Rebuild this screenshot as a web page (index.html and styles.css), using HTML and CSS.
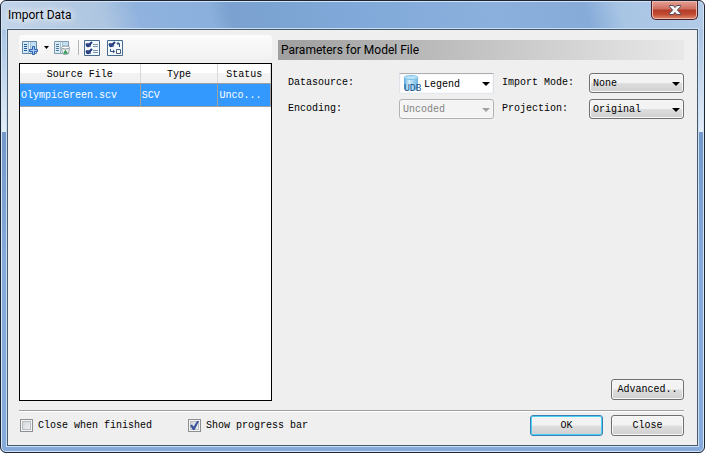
FILE: index.html
```html
<!DOCTYPE html>
<html lang="en">
<head>
<meta charset="utf-8">
<title>Import Data</title>
<link rel="stylesheet" href="styles.css">
</head>
<body>
<div class="window">
  <header class="titlebar">
    <h1 class="title">Import Data</h1>
    <button class="close-window" type="button" aria-label="Close window">
      <svg width="12" height="10" viewBox="0 0 12 10"><path d="M.5.5H4.3L6 2.6 7.7.5h3.8v1.2L8.4 5l3.1 3.3v1.2H7.7L6 7.4 4.3 9.5H.5V8.3L3.6 5 .5 1.7z" fill="#f6f4f4" stroke="#4d4a5c"/></svg>
    </button>
  </header>
  <main class="client">
    <div class="columns">
      <section class="files">
        <div class="toolbar">
          <button class="tool" type="button" aria-label="Add file">
            <svg width="17" height="16" viewBox="0 0 17 16"><path d="M.5 1.500h14v12H.5z" fill="#eef6fc" stroke="#6288a8"/><path d="M1 2h5v11H1z" fill="#d3e9f8"/><path d="M9 2h5v11H9z" fill="#c0def4"/><path d="M6.500 2v11M8.500 2v11" stroke="#9bbdd6"/><path d="M2 4.500h3M2 6.500h3M2 8.500h3M2 10.500h3" stroke="#24588c"/><path d="M10.500 6.500h2v3h3v2h-3v3h-2v-3h-3v-2h3z" fill="#a9cbf4" stroke="#2c5fae"/></svg>
          </button>
          <button class="tool tool-arrow" type="button" aria-label="More add options">
            <svg width="5" height="3" viewBox="0 0 5 3"><path d="M0 0h5L2.500 3z"/></svg>
          </button>
          <button class="tool" type="button" aria-label="Remove file">
            <svg width="17" height="16" viewBox="0 0 17 16"><path d="M.5 1.500h14v12H.5z" fill="#eef6fc" stroke="#7e9bb0"/><path d="M1 2h5v11H1z" fill="#d8ebf7"/><path d="M9 2h5v6H9z" fill="#c4dff1"/><path d="M6.500 2v11M8.500 2v11" stroke="#a5c1d4"/><path d="M2 4.500h3M2 6.500h3M2 8.500h3M2 10.500h3" stroke="#52789a"/><path d="M7.500 8.500h8l-1 5-2 1h-3l-1-1z" fill="#eef2f1" stroke="#9aa5a7"/><ellipse cx="11.500" cy="7.500" rx="4" ry="1.500" fill="#fff" stroke="#829093"/><path d="M10 13.200h3L11.500 10.800z" fill="none" stroke="#279552" stroke-width="1.200"/></svg>
          </button>
          <span class="divider"></span>
          <button class="tool tool-check" type="button" aria-label="Select all">
            <svg width="16" height="16" viewBox="0 0 16 16"><path d="M.5.500h15v15H.5z" fill="#f3f9fd" stroke="#466b8c"/><path d="M2.500 3.500h4v3h-4zM2.500 10.500h4v3h-4z" fill="#c5d3e8" stroke="#5b6f9a"/><path d="M2 4l2 2 4-4M2 11l2 2 4-4" fill="none" stroke="#263c80" stroke-width="2"/><path d="M9 4.500h5M9 6.500h5M9 10.500h5M9 12.500h5" stroke="#7b95aa"/></svg>
          </button>
          <button class="tool" type="button" aria-label="Invert selection">
            <svg width="16" height="16" viewBox="0 0 16 16"><path d="M.5.500h15v15H.5z" fill="#f3f9fd" stroke="#466b8c"/><path d="M2.500 3.500h4v3h-4z" fill="#c5d3e8" stroke="#5b6f9a"/><path d="M2 4l2 2 4-4" fill="none" stroke="#263c80" stroke-width="2"/><path d="M9.500 9.500h4v4h-4z" fill="#fff" stroke="#466080"/><path d="M11 3.500h1.500V7M3.500 9v2.500H7" fill="none" stroke="#2d4f79"/><path d="M11.500 1.500v4l-2-2zM6 9.500v4l2-2z" fill="#2d4f79"/></svg>
          </button>
        </div>
        <div class="table-frame">
          <table class="file-table">
            <colgroup><col class="col-source"><col class="col-type"><col></colgroup>
            <thead><tr><th>Source File</th><th>Type</th><th>Status</th></tr></thead>
            <tbody><tr><td>OlympicGreen.scv</td><td>SCV</td><td>Unco...</td></tr></tbody>
          </table>
        </div>
      </section>
      <section class="parameters">
        <h2 class="section-title">Parameters for Model File</h2>
        <div class="fields">
          <label for="datasource">Datasource:</label>
          <div class="combo combo-white">
            <select id="datasource"><option>Legend</option></select>
            <svg class="db-icon" width="17" height="17" viewBox="0 0 17 17"><defs><linearGradient id="db"><stop stop-color="#58a9dc"/><stop offset=".35" stop-color="#d5f0fc"/><stop offset="1" stop-color="#6eb5df"/></linearGradient></defs><path d="M1 2.500v11c0 3 14 3 14 0v-11z" fill="url(#db)"/><ellipse cx="8" cy="2.500" rx="7" ry="2" fill="#b8e3f8" stroke="#83c2e4"/><text class="db-text" x="1" y="16">UDB</text></svg>
            <svg class="arrow" width="8" height="4" viewBox="0 0 8 4"><path d="M0 0h8L4 4z"/></svg>
          </div>
          <label for="mode">Import Mode:</label>
          <div class="combo">
            <select id="mode"><option>None</option></select>
            <svg class="arrow" width="8" height="4" viewBox="0 0 8 4"><path d="M0 0h8L4 4z"/></svg>
          </div>
          <label for="encoding">Encoding:</label>
          <div class="combo combo-disabled">
            <select id="encoding" disabled><option>Uncoded</option></select>
            <svg class="arrow" width="8" height="4" viewBox="0 0 8 4"><path d="M0 0h8L4 4z"/></svg>
          </div>
          <label for="projection">Projection:</label>
          <div class="combo">
            <select id="projection"><option>Original</option></select>
            <svg class="arrow" width="8" height="4" viewBox="0 0 8 4"><path d="M0 0h8L4 4z"/></svg>
          </div>
        </div>
        <button class="button advanced" type="button">Advanced..</button>
      </section>
    </div>
    <footer class="footer">
      <label class="check"><input type="checkbox">Close when finished</label>
      <label class="check"><input type="checkbox" checked>Show progress bar</label>
      <div class="actions">
        <button class="button button-default" type="button">OK</button>
        <button class="button" type="button">Close</button>
      </div>
    </footer>
  </main>
</div>
</body>
</html>
```

FILE: styles.css
```css
* {
  box-sizing: border-box;
}

body {
  margin: 0;
  background: #fff;
  color: #000;
  font: 10px/14px "Liberation Mono", monospace;
}

button,
select,
input {
  margin: 0;
  color: inherit;
  font: inherit;
}

svg {
  display: block;
}

.window {
  display: flex;
  flex-direction: column;
  min-height: 100vh;
  padding: 0 6px 6px;
  border: 1px solid #1b2534;
  border-radius: 6px;
  background:
    linear-gradient(75deg, #c3d5e9 0, #adc5e0 15%, #8fb2de 20%, #8bb0dd 30%, #7aa1cf 33%, #80a9d9 50%, #8bb0dd 70%, #86abd9 83%, #a8c5e4 88%, #b2cbe7 100%) top / 100% 29px no-repeat,
    linear-gradient(#a9c4e3, #e3edf8) 0 29px / 100% 102px no-repeat,
    linear-gradient(#7299c8, #86abdb 130px) 0 131px no-repeat;
  box-shadow: inset 0 0 0 1px #d5e5f5;
}

.titlebar {
  display: flex;
  align-items: flex-start;
  justify-content: space-between;
  height: 28px;
}

.title {
  margin: 0;
  padding: 4px 0 0 1px;
  font: 12px/20px Roboto, sans-serif;
  text-shadow: 0 0 6px #fff, 0 0 10px #fff;
}

.close-window {
  display: grid;
  place-items: center;
  width: 47px;
  height: 19px;
  padding: 0;
  border: 1px solid #491e25;
  border-top: 0;
  border-radius: 0 0 5px 5px;
  background: linear-gradient(#e3a398, #cf6c5b 45%, #b33a27 50%, #c14d35 75%, #e08b6e);
  box-shadow: inset 0 0 0 1px #edb8ad;
}

.client {
  display: flex;
  flex: 1;
  flex-direction: column;
  padding: 5px 13px 9px 11px;
  border: 1px solid #47596b;
  background: #efefef;
  box-shadow: 0 0 0 1px #c9dff3;
}

.columns {
  display: grid;
  flex: 1;
  grid-template-columns: 253fr 406fr;
  gap: 6px;
}

.files,
.parameters {
  display: flex;
  flex-direction: column;
}

.toolbar {
  display: flex;
  align-items: center;
  height: 25px;
  margin-bottom: 3px;
  padding-left: 3px;
  border-radius: 3px;
  background: linear-gradient(#fcfcfc, #f1f1f1);
}

.tool {
  padding: 0;
  border: 0;
  background: none;
}

.tool-arrow {
  padding: 0 5px;
}

.divider {
  width: 1px;
  height: 15px;
  margin: 0 5px 0 7px;
  background: #b5b5b5;
}

.tool-check {
  margin-right: 7px;
}

.table-frame {
  flex: 1;
  border: 1px solid #000;
  background: #fff;
}

.file-table {
  width: 100%;
  border-collapse: collapse;
  table-layout: fixed;
}

.col-source {
  width: 48%;
}

.col-type {
  width: 31%;
}

.file-table th,
.file-table td {
  padding: 2px 1px 0;
  border-right: 1px solid #a0a0a0;
  border-bottom: 1px solid #a0a0a0;
  font-weight: normal;
  white-space: nowrap;
}

.file-table th {
  height: 19px;
  padding-top: 3px;
  border-right-color: #d9d9d9;
  background: linear-gradient(#fff 45%, #f3f3f3 50%, #f0f0f0);
}

.file-table td {
  height: 23px;
  background: #3399ff;
  color: #fff;
}

.parameters {
  padding-top: 5px;
}

.section-title {
  margin: 0 0 13px;
  padding-left: 3px;
  background: linear-gradient(90deg, #9f9f9f, #e8e8e8);
  font: 12px/20px Roboto, sans-serif;
}

.fields {
  display: grid;
  grid-template-columns: 103px 1fr 79px 1fr;
  row-gap: 6px;
  column-gap: 8px;
  grid-auto-rows: 20px;
  padding-left: 10px;
}

.fields label {
  line-height: 20px;
  white-space: nowrap;
}

.combo {
  position: relative;
}

.combo select {
  width: 100%;
  height: 20px;
  padding: 2px 16px 0 3px;
  border: 1px solid #707070;
  border-radius: 3px;
  background: linear-gradient(#f3f3f3 48%, #dedede 52%, #cfcfcf);
  box-shadow: inset 0 0 0 1px #f8f8f8;
  appearance: none;
}

.combo-white select {
  height: 21px;
  padding-left: 24px;
  border-color: #abadb3 #dbdfe6 #e3e9ef #e2e3ea;
  border-radius: 1px;
  background: #fff;
}

.combo-disabled select {
  border-color: #adb2b5;
  background: #f4f4f4;
  color: #838383;
  opacity: 1;
}

.arrow {
  position: absolute;
  top: 9px;
  right: 4px;
  pointer-events: none;
}

.combo-disabled .arrow {
  fill: #a0a0a0;
}

.db-icon {
  position: absolute;
  top: 2px;
  left: 4px;
  overflow: visible;
  pointer-events: none;
}

.db-text {
  fill: #0c4f8c;
  font: 9px "Liberation Sans Narrow", Roboto, sans-serif;
}

.button {
  width: 73px;
  height: 21px;
  padding: 0;
  border: 1px solid #707070;
  border-radius: 3px;
  background: linear-gradient(#f3f3f3 48%, #dedede 52%, #cfcfcf);
  box-shadow: inset 0 0 0 1px #f8f8f8;
}

.button-default {
  border-color: #3c7fb1;
  box-shadow: inset 0 0 0 1px #48d1f5;
}

.advanced {
  margin-top: auto;
  margin-bottom: 1px;
  align-self: flex-end;
}

.footer {
  display: flex;
  align-items: center;
  margin-top: 9px;
  padding-top: 4px;
  border-top: 1px solid #a0a0a0;
  box-shadow: inset 0 1px #fff;
}

.check {
  display: flex;
  align-items: center;
  gap: 5px;
  padding-left: 1px;
  margin-right: 35px;
}

.check input {
  display: grid;
  place-items: center;
  width: 13px;
  height: 13px;
  border: 1px solid #8e8f8f;
  background: linear-gradient(135deg, #cbcfd5, #f6f6f6);
  box-shadow: inset 0 0 0 1px #f4f4f4, inset 0 0 0 2px #b8bdc4;
  appearance: none;
}

.check input:checked::before {
  width: 9px;
  height: 9px;
  background: #3b519b;
  clip-path: polygon(0 50%, 22% 40%, 40% 65%, 78% 0, 100% 0, 50% 100%, 33% 100%);
  content: "";
}

.actions {
  display: flex;
  gap: 8px;
  margin-left: auto;
}
```
